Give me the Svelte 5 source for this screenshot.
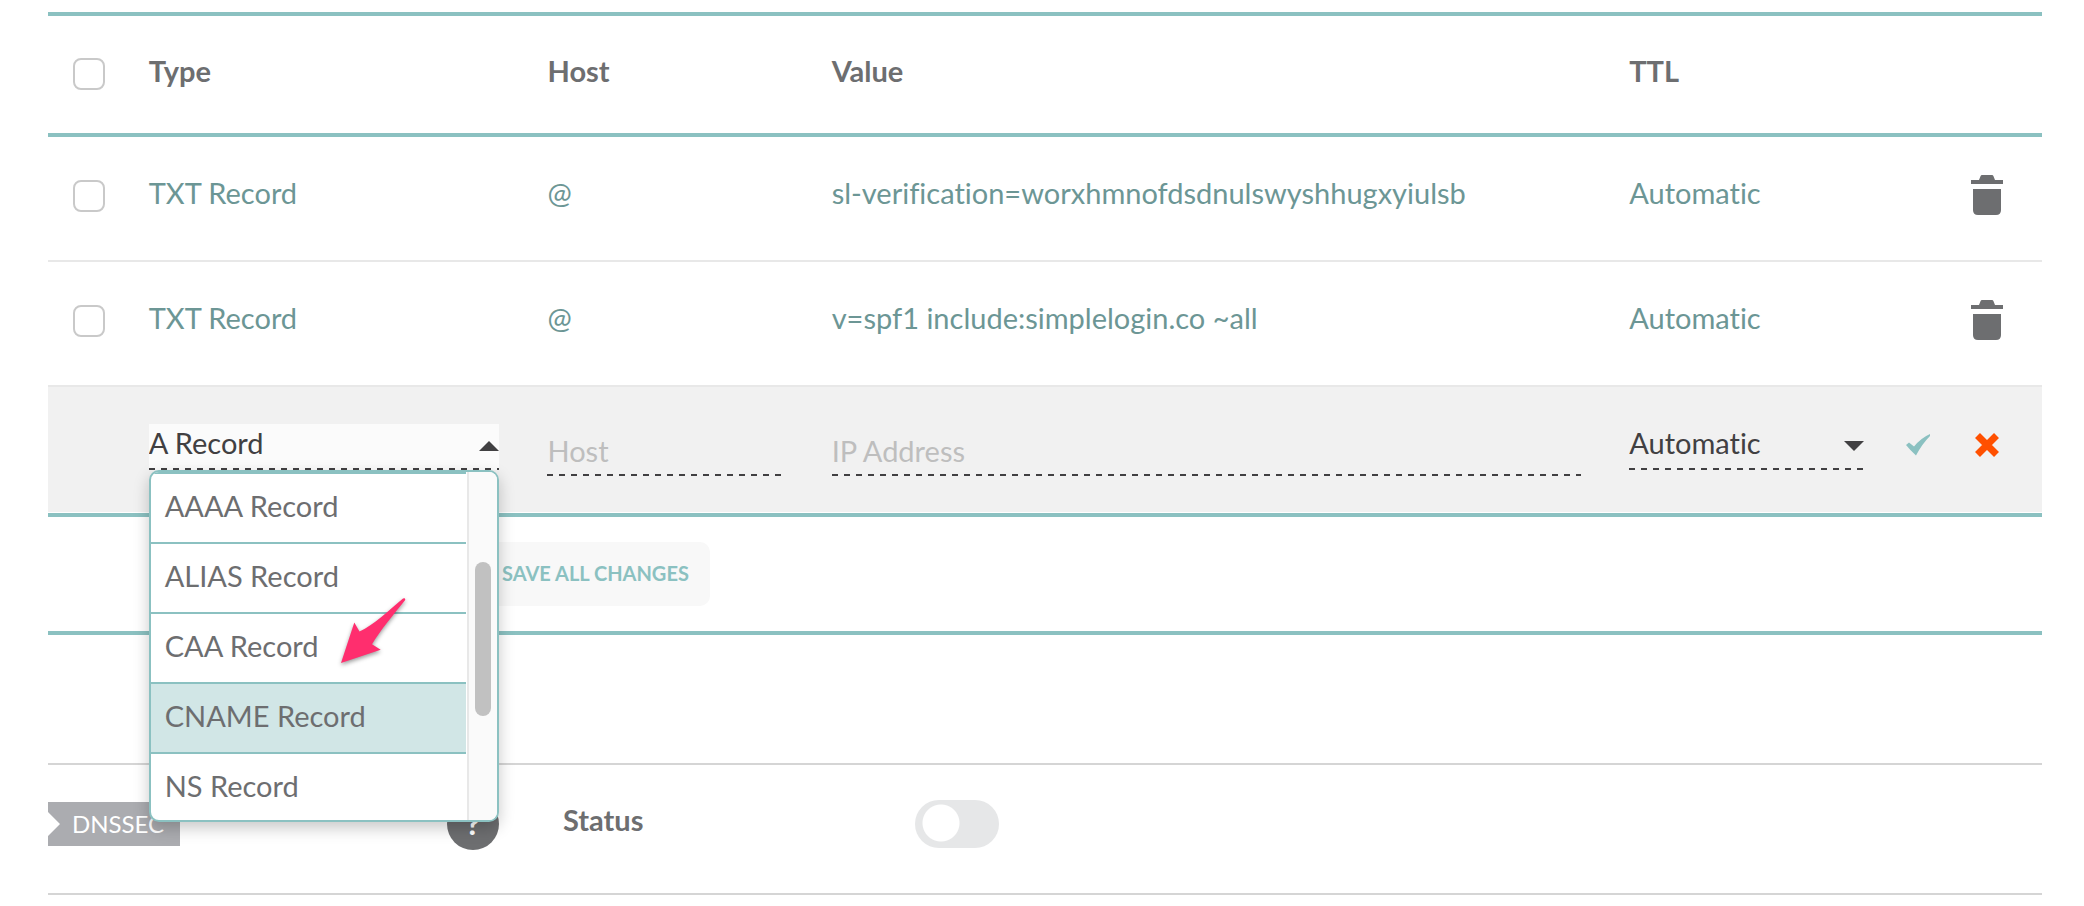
<script>
  const records = [
    { id: 1, type: 'TXT Record', host: '@', value: 'sl-verification=worxhmnofdsdnulswyshhugxyiulsb', ttl: 'Automatic' },
    { id: 2, type: 'TXT Record', host: '@', value: 'v=spf1 include:simplelogin.co ~all', ttl: 'Automatic' }
  ];
  const types = ['AAAA Record', 'ALIAS Record', 'CAA Record', 'CNAME Record', 'NS Record'];

  let type = $state('A Record');
  let highlighted = $state('CNAME Record');
  let open = $state(true);
  let host = $state('');
  let address = $state('');
  let dnssec = $state(false);

  function toggle(event) {
    event.preventDefault();
    open = !open;
  }

  function choose(name) {
    type = name;
    open = false;
  }
</script>

<main>
  <table>
    <colgroup>
      <col class="c-check" /><col class="c-type" /><col class="c-host" /><col class="c-value" /><col class="c-ttl" /><col class="c-actions" />
    </colgroup>
    <thead>
      <tr>
        <th class="pick"><input type="checkbox" aria-label="Select all records" /></th>
        <th>Type</th>
        <th>Host</th>
        <th>Value</th>
        <th>TTL</th>
        <th></th>
      </tr>
    </thead>
    <tbody>
      {#each records as record (record.id)}
        <tr>
          <td class="pick"><input type="checkbox" aria-label={`Select ${record.value}`} /></td>
          <td>{record.type}</td>
          <td>{record.host}</td>
          <td>{record.value}</td>
          <td>{record.ttl}</td>
          <td>
            <div class="actions">
              <button class="icon" aria-label="Delete record">
                <svg width="32" height="40" viewBox="0 0 32 40" fill="#6d6e70">
                  <path d="M0 5h8l1.600-4q.4-1 1.400-1h10q1 0 1.400 1L24 5h8v4H0z" />
                  <path d="M2 14h28v21q0 5-5 5H7q-5 0-5-5z" />
                </svg>
              </button>
            </div>
          </td>
        </tr>
      {/each}
      <tr class="editing">
        <td></td>
        <td>
          <div class="type-field">
            <div class="select active">
              <select aria-label="Record type" bind:value={type} onmousedown={toggle}>
                <option>A Record</option>
                {#each types as name}<option>{name}</option>{/each}
              </select>
              <svg class="caret" width="20" height="10" viewBox="0 0 20 10"><path d="M0 10L10 0l10 10z" fill="#414042" /></svg>
            </div>
            {#if open}
              <div class="menu">
                <div class="options" role="listbox" aria-label="Record types">
                  {#each types as name}
                    <button
                      class="option"
                      class:highlighted={name === highlighted}
                      role="option"
                      aria-selected={name === type}
                      onmouseenter={() => (highlighted = name)}
                      onclick={() => choose(name)}>{name}</button>
                  {/each}
                </div>
                <div class="track"><div class="thumb"></div></div>
                <svg class="pointer" width="72" height="74" viewBox="0 0 72 74">
                  <path d="M4 67L17.300 26.500 22.500 35.500C37 29 51 15 66 2.500q2.500-1 2.200 1.500C57 18 42 36 35 48.300L43.700 53.700z" fill="#ff2e6e" />
                </svg>
              </div>
            {/if}
          </div>
        </td>
        <td><input class="text host" type="text" placeholder="Host" aria-label="Host" bind:value={host} /></td>
        <td><input class="text address" type="text" placeholder="IP Address" aria-label="IP Address" bind:value={address} /></td>
        <td>
          <div class="select ttl">
            <select aria-label="TTL">
              <option>Automatic</option>
            </select>
            <svg class="caret" width="20" height="10" viewBox="0 0 20 10"><path d="M0 0h20L10 10z" fill="#414042" /></svg>
          </div>
        </td>
        <td>
          <div class="actions">
            <button class="icon" aria-label="Save record">
              <svg width="24" height="22" viewBox="0 0 24 22"><path d="M0 11l3-2.500 5 4Q15 4 24 0v2Q16 10 10 21.500Q4 16 0 11z" fill="#8bc1c1" /></svg>
            </button>
            <button class="icon cross" aria-label="Discard record">
              <svg width="24" height="24" viewBox="0 0 24 24"><path d="M2.500 2.500l19 19M21.500 2.500l-19 19" stroke="#ff5000" stroke-width="7" fill="none" /></svg>
            </button>
          </div>
        </td>
      </tr>
    </tbody>
  </table>

  <div class="save-bar">
    <button class="save">Save all changes</button>
  </div>

  <section class="dnssec">
    <div class="tag-cell">
      <h2>DNSSEC</h2>
      <button class="help" aria-label="About DNSSEC">?</button>
    </div>
    <label for="dnssec-status">Status</label>
    <input id="dnssec-status" class="switch" type="checkbox" role="switch" bind:checked={dnssec} />
  </section>
</main>

<style>
  :global(body) {
    background: #fff;
  }

  main {
    padding: 12px 42px 11px 48px;
    font-family: Lato, "Open Sans", sans-serif;
    font-size: 29px;
    font-variant-ligatures: none;
    line-height: 36px;
    color: #6d6e70;
  }

  * {
    box-sizing: border-box;
  }

  button,
  input,
  select {
    margin: 0;
    font: inherit;
    color: inherit;
  }

  button {
    border: 0;
    padding: 0;
    background: none;
    cursor: pointer;
  }

  svg {
    display: block;
  }

  table {
    width: 100%;
    table-layout: fixed;
    border-collapse: separate;
    border-spacing: 0;
    border-top: 4px solid #8bc1c1;
    border-bottom: 4px solid #8bc1c1;
  }

  .c-check { width: 5.05%; }
  .c-type { width: 20%; }
  .c-host { width: 14.25%; }
  .c-value { width: 40%; }
  .c-ttl { width: 11.7%; }
  .c-actions { width: 9%; }

  th,
  td {
    padding: 0;
    text-align: left;
    vertical-align: top;
  }

  th {
    height: 121px;
    padding-top: 37px;
    border-bottom: 4px solid #8bc1c1;
    font-weight: 700;
  }

  td {
    height: 125px;
    padding-top: 38px;
    border-bottom: 2px solid #e8e8e8;
    color: #6c9695;
    white-space: nowrap;
  }

  .pick {
    padding-left: 25px;
  }

  input[type='checkbox']:not(.switch) {
    display: block;
    width: 32px;
    height: 32px;
    margin-top: 5px;
    appearance: none;
    border: 2px solid #c9c9c9;
    border-radius: 8px;
    background: #fff;
  }

  .actions {
    display: flex;
    justify-content: flex-end;
    align-items: center;
    gap: 45px;
    height: 40px;
    padding-right: 39px;
  }

  .editing td {
    height: 126px;
    padding-top: 37px;
    border-bottom: 1px solid #fff;
    background: #f1f1f1;
    color: #414042;
  }

  .editing .actions {
    height: 42px;
    padding-right: 43px;
  }

  .type-field {
    position: relative;
    width: 350px;
  }

  .select {
    display: flex;
    align-items: center;
    height: 46px;
    padding-bottom: 2px;
    background: repeating-linear-gradient(90deg, #414042 0 6px, transparent 6px 12px) 0 100% / 100% 2px no-repeat;
  }

  .select.active {
    background-color: #fbfbfb;
  }

  .select.ttl {
    width: 235px;
  }

  .select select {
    flex: 1;
    height: 44px;
    padding: 0 0 6px;
    appearance: none;
    border: 0;
    background: none;
    outline: none;
  }

  .caret {
    pointer-events: none;
  }

  .text {
    display: block;
    height: 52px;
    padding: 4px 0;
    border: 0;
    border-radius: 0;
    background: repeating-linear-gradient(90deg, #414042 0 6px, transparent 6px 12px) 0 100% / 100% 2px no-repeat;
    outline: none;
  }

  .text::placeholder {
    color: #bebebe;
    opacity: 1;
  }

  .host {
    width: 83%;
  }

  .address {
    width: 94%;
  }

  .menu {
    position: absolute;
    z-index: 2;
    top: 100%;
    left: 0;
    display: flex;
    width: 100%;
    border: 2px solid #8bc1c1;
    border-radius: 10px;
    background: #fff;
    box-shadow: 0 6px 16px rgba(0, 0, 0, 0.22);
    overflow: hidden;
  }

  .options {
    flex: 1;
    border-top: 2px solid #8bc1c1;
    color: #6d6e70;
  }

  .option {
    display: block;
    width: 100%;
    height: 70px;
    padding: 0 14px 4px;
    border-bottom: 2px solid #8bc1c1;
    text-align: left;
  }

  .option:last-child {
    height: 66px;
    padding-bottom: 2px;
    border-bottom: 0;
  }

  .option.highlighted {
    background: #d1e6e6;
  }

  .track {
    width: 30px;
    margin-left: 1px;
    padding: 90px 4px 0 6px;
    border-left: 2px solid #e8e8e8;
    background: #fafafa;
  }

  .thumb {
    width: 16px;
    height: 154px;
    border-radius: 8px;
    background: #c1c1c1;
  }

  .pointer {
    position: absolute;
    top: 124px;
    left: 186px;
    pointer-events: none;
    filter: drop-shadow(0 2px 2px rgba(0, 0, 0, 0.4));
  }

  .save-bar {
    display: flex;
    height: 118px;
    padding: 25px 0 0 400px;
    border-bottom: 4px solid #8bc1c1;
  }

  .save {
    height: 64px;
    padding: 0 21px 2px 54px;
    border-radius: 10px;
    background: #f8f8f8;
    color: #8bc1c1;
    font-size: 20px;
    font-weight: 700;
    line-height: 24px;
    text-transform: uppercase;
  }

  .dnssec {
    display: flex;
    align-items: center;
    height: 132px;
    margin-top: 128px;
    padding-bottom: 10px;
    border-top: 2px solid #d5d5d5;
    border-bottom: 2px solid #d5d5d5;
  }

  .tag-cell {
    display: flex;
    align-items: center;
    justify-content: space-between;
    width: 451px;
    margin-right: 64px;
  }

  h2 {
    margin: 0;
    padding: 0 16px 0 24px;
    background: #abacb0;
    clip-path: polygon(0 0, 100% 0, 100% 100%, 0 100%, 0 34px, 12px 22px, 0 10px);
    color: #fff;
    font-size: 24px;
    font-weight: 400;
    line-height: 44px;
  }

  .help {
    width: 52px;
    height: 52px;
    border-radius: 50%;
    background: #6d6e70;
    color: #fff;
    font-weight: 900;
  }

  .dnssec label {
    width: 352px;
    padding-bottom: 8px;
    font-weight: 700;
  }

  .switch {
    width: 84px;
    height: 48px;
    appearance: none;
    border-radius: 24px;
    background: radial-gradient(circle at 26px 23px, #fff 18px, transparent 19px) #e6e7e8;
    cursor: pointer;
  }

  .switch:checked {
    background: radial-gradient(circle at 58px 23px, #fff 18px, transparent 19px) #8bc1c1;
  }
</style>
